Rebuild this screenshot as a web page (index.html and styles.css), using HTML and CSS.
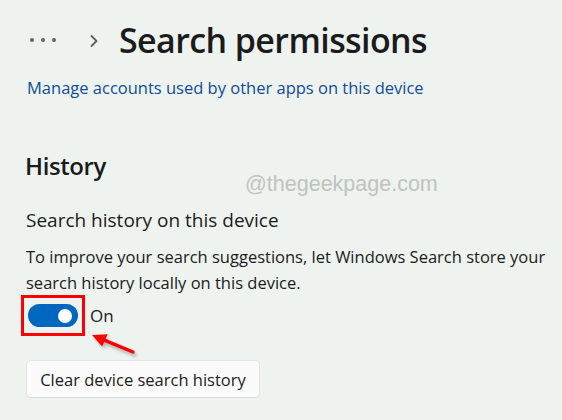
FILE: index.html
```html
<!DOCTYPE html>
<html lang="en">
<head>
<meta charset="utf-8">
<title>Search permissions</title>
<link rel="stylesheet" href="styles.css">
</head>
<body>
<main class="page">
  <header class="crumbs">
    <span class="more"><i></i><i></i><i></i></span>
    <svg class="chev" width="10" height="14" viewBox="0 0 10 14"><path d="M2.5 2 L7.5 7 L2.5 12" fill="none" stroke="#5f6160" stroke-width="1.8" stroke-linecap="round" stroke-linejoin="round"/></svg>
    <h1 class="title">Search permissions</h1>
  </header>
  <a class="link" href="#">Manage accounts used by other apps on this device</a>
  <section class="history">
    <h2 class="section-title">History</h2>
    <div class="watermark">@thegeekpage.com</div>
    <h3 class="setting">Search history on this device</h3>
    <p class="desc">To improve your search suggestions, let Windows Search store your search history locally on this device.</p>
    <div class="toggle-row">
      <span class="highlight"><span class="switch"><span class="knob"></span></span></span>
      <span class="state">On</span>
      <svg class="arrow" width="60" height="34" viewBox="0 0 60 34">
        <defs><filter id="sh" x="-30%" y="-30%" width="160%" height="160%"><feGaussianBlur stdDeviation="1.6"/></filter></defs>
        <g filter="url(#sh)" opacity="0.45" transform="translate(2,3)">
          <path d="M46 23 L17.9 11.4" stroke="#777" stroke-width="4" stroke-linecap="round"/>
          <path d="M5 6 L15.6 16.9 L20.2 5.9 Z" fill="#777"/>
        </g>
        <path d="M46 23 L17.9 11.4" stroke="#f00" stroke-width="3.5" stroke-linecap="round"/>
        <path d="M5 6 L15.1 17.6 L20.7 5.2 Z" fill="#f00"/>
      </svg>
    </div>
    <button class="btn" type="button">Clear device search history</button>
  </section>
</main>
</body>
</html>
```

FILE: styles.css
```css
html, body {
  margin: 0;
  padding: 0;
}
body {
  background: #eef3ef;
  font-family: "Open Sans", "Noto Sans", sans-serif;
  color: #1b1b1b;
  width: 562px;
  height: 420px;
  overflow: hidden;
}
.page {
  padding: 16px 0 0 25px;
  position: relative;
}
.crumbs {
  display: flex;
  align-items: center;
  height: 48px;
  margin-left: 5px;
}
.more {
  display: flex;
  gap: 7px;
  width: 26px;
}
.more i {
  display: block;
  width: 4px;
  height: 4px;
  border-radius: 50%;
  background: #5f6160;
}
.chev {
  margin-left: 33px;
  margin-top: 1px;
}
.title {
  margin: 0 0 0 20px;
  font-size: 34px;
  font-weight: 600;
  letter-spacing: -0.6px;
  line-height: 48px;
}
.link {
  display: block;
  margin-top: 13px;
  margin-left: 2px;
  color: #0f4c9e;
  text-decoration: none;
  font-size: 16.5px;
  line-height: 22px;
}
.history {
  position: relative;
  margin-top: 51px;
}
.section-title {
  margin: 0;
  font-size: 24px;
  font-weight: 600;
  letter-spacing: -0.4px;
  line-height: 32px;
}
.watermark {
  position: absolute;
  left: 220px;
  top: 22px;
  font-family: "Liberation Sans", Arial, sans-serif;
  font-size: 21.5px;
  color: #bfc3c1;
}
.setting {
  margin: 26px 0 0 1px;
  font-size: 19px;
  font-weight: 400;
  line-height: 24px;
}
.desc {
  margin: 12px 0 0 1px;
  font-size: 16.5px;
  line-height: 26px;
  width: 530px;
}
.toggle-row {
  position: relative;
  display: flex;
  align-items: center;
  gap: 5px;
  margin-top: -1px;
  margin-left: -4px;
}
.highlight {
  display: flex;
  align-items: center;
  justify-content: center;
  width: 58px;
  height: 35px;
  border: 3px solid #f00;
}
.switch {
  position: relative;
  width: 50px;
  height: 23px;
  border-radius: 12px;
  background: #0067c0;
}
.knob {
  position: absolute;
  right: 6px;
  top: 4.5px;
  width: 14px;
  height: 14px;
  border-radius: 50%;
  background: #fff;
}
.state {
  font-size: 17px;
  line-height: 22px;
}
.arrow {
  position: absolute;
  left: 66px;
  top: 34px;
}
.btn {
  display: block;
  margin-top: 24px;
  margin-left: 1px;
  width: 234px;
  height: 38px;
  padding: 0;
  background: #fbfbfb;
  border: 1px solid #e3e5e4;
  border-bottom-color: #d6d8d7;
  border-radius: 5px;
  font-family: "Open Sans", "Noto Sans", sans-serif;
  font-size: 16.5px;
  color: #1b1b1b;
}
```
